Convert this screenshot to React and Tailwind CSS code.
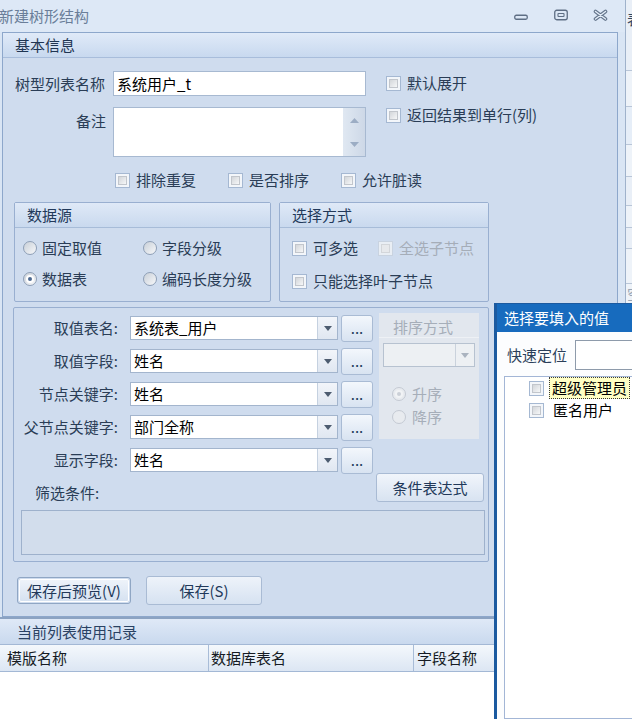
import React from "react";

function Check({ disabled = false }) {
  return (
    <span
      className={
        disabled
          ? "flex-none w-[15px] h-[15px] p-[2px] border border-[#c9d3e0] bg-[#e9eef4]"
          : "flex-none w-[15px] h-[15px] p-[2px] border border-[#a5b8d2] bg-[#f3f6fa]"
      }
    >
      <span
        className={
          disabled
            ? "block w-full h-full border border-[#d3d6da] bg-[#e7e9ec]"
            : "block w-full h-full border border-[#c2c6cc] bg-linear-to-br from-[#d3d6da] to-[#f6f7f8]"
        }
      />
    </span>
  );
}

function CheckItem({ label, disabled = false, className = "" }) {
  return (
    <div className={"flex items-center gap-[6px] h-[20px] " + className}>
      <Check disabled={disabled} />
      <span className={disabled ? "text-[#a5adb8]" : ""}>{label}</span>
    </div>
  );
}

function Radio({ checked = false, disabled = false }) {
  return (
    <span
      className={
        disabled
          ? "flex-none w-[14px] h-[14px] rounded-full border border-[#c4cad3] bg-[#e8ebef] flex items-center justify-center"
          : "flex-none w-[14px] h-[14px] rounded-full border border-[#8e9fb6] bg-linear-to-br from-[#c9d0d8] to-[#f7f8fa] flex items-center justify-center"
      }
    >
      {checked && (
        <span
          className={
            disabled
              ? "w-[8px] h-[8px] rounded-full border-2 border-[#f1f3f5] bg-[#cbd0d7]"
              : "w-[8px] h-[8px] rounded-full border-2 border-white bg-[#4b6890]"
          }
        />
      )}
    </span>
  );
}

function RadioItem({ label, checked, disabled, className = "" }) {
  return (
    <div className={"flex items-center gap-[5px] h-[20px] " + className}>
      <Radio checked={checked} disabled={disabled} />
      <span className={disabled ? "text-[#a9b1bc]" : ""}>{label}</span>
    </div>
  );
}

function GroupHeader({ children }) {
  return (
    <div className="h-[25px] flex-none border-b border-[#a7bcd8] bg-linear-to-b from-[#dfe9f7] to-[#c9d9ee] pl-[12px] flex items-center text-[#22395a]">
      {children}
    </div>
  );
}

function Combo({ value }) {
  return (
    <div className="ml-[12px] flex-none w-[208px] h-[24px] flex border border-[#a3b5cd] bg-white">
      <div className="flex-1 pl-[3px] flex items-center text-black">{value}</div>
      <div className="w-[20px] border-l border-[#c5d1e0] bg-linear-to-b from-[#f2f5fa] to-[#e0e7f1] flex items-center justify-center">
        <svg width="8" height="5" viewBox="0 0 8 5">
          <path d="M0 0h8L4 5z" fill="#4d5c70" />
        </svg>
      </div>
    </div>
  );
}

function FieldRow({ label, value }) {
  return (
    <div className="flex items-center h-[24px]">
      <span className="w-[104px] text-right">{label}</span>
      <Combo value={value} />
      <div className="ml-[3px] flex-none w-[32px] h-[27px] rounded-[3px] border border-[#a9bbd4] bg-linear-to-b from-[#f3f7fc] to-[#d8e3f1] flex items-center justify-center text-[#22395a]">
        ...
      </div>
    </div>
  );
}

function TitleBar() {
  return (
    <div className="h-[32px] flex-none flex items-start bg-[#dde8f6]">
      <span className="-ml-[1px] mt-[6px] text-[#6a7e99]">新建树形结构</span>
      <div className="ml-auto mr-[17px] mt-[9px] flex items-start">
        <svg width="14" height="12" viewBox="0 0 14 12">
          <rect x="0.75" y="6.25" width="12.5" height="4" rx="1.5" fill="none" stroke="#5e6e84" strokeWidth="1.3" />
        </svg>
        <svg className="ml-[26px]" width="14" height="12" viewBox="0 0 14 12">
          <rect x="0.75" y="1.25" width="12.5" height="9.5" rx="2" fill="none" stroke="#5e6e84" strokeWidth="1.3" />
          <rect x="4" y="4.5" width="6" height="3" rx="0.5" fill="none" stroke="#5e6e84" strokeWidth="1.1" />
        </svg>
        <svg className="ml-[25px]" width="15" height="12" viewBox="0 0 15 12">
          <path d="M2.5 2.5L12.5 10M12.5 2.5L2.5 10" stroke="#65768c" strokeWidth="3.6" strokeLinecap="round" />
          <path d="M2.5 2.5L12.5 10M12.5 2.5L2.5 10" stroke="#e4edf8" strokeWidth="1.4" strokeLinecap="round" />
        </svg>
      </div>
    </div>
  );
}

function BasicInfo() {
  return (
    <div className="ml-[2px] w-[616px] h-[585px] flex-none border border-[#8da7cb] bg-[#cfdcee] flex flex-col">
      <div className="h-[25px] flex-none border-b border-[#a8bddb] bg-linear-to-b from-[#e0eaf8] to-[#c8d9ef] pl-[12px] flex items-center text-[#1f3552]">
        基本信息
      </div>

      {/* name / remark */}
      <div className="mt-[13px] flex">
        <div className="flex flex-col gap-[11px]">
          <div className="flex items-center h-[25px]">
            <span className="w-[102px] text-right">树型列表名称</span>
            <div className="ml-[8px] w-[253px] h-[25px] border border-[#a7b9d1] bg-white pl-[3px] flex items-center text-black">
              系统用户_t
            </div>
          </div>
          <div className="flex">
            <span className="w-[103px] text-right pt-[4px]">备注</span>
            <div className="ml-[7px] w-[253px] h-[50px] border border-[#a7b9d1] bg-white flex justify-end">
              <div className="w-[22px] h-full bg-linear-to-r from-[#e0e8f2] to-[#cdd8e7] flex flex-col items-center justify-between pt-[10px] pb-[9px]">
                <svg width="9" height="5" viewBox="0 0 9 5">
                  <path d="M4.5 0L9 5H0z" fill="#9cadc4" />
                </svg>
                <svg width="9" height="5" viewBox="0 0 9 5">
                  <path d="M0 0h9L4.5 5z" fill="#9cadc4" />
                </svg>
              </div>
            </div>
          </div>
        </div>
        <div className="ml-[20px] mt-[2px] flex flex-col gap-[12px]">
          <CheckItem label="默认展开" />
          <CheckItem label="返回结果到单行(列)" />
        </div>
      </div>

      {/* options */}
      <div className="mt-[13px] pl-[112px] flex">
        <CheckItem label="排除重复" className="w-[113px]" />
        <CheckItem label="是否排序" className="w-[113px]" />
        <CheckItem label="允许脏读" className="w-[113px]" />
      </div>

      {/* data source + selection mode */}
      <div className="mt-[12px] ml-[11px] flex gap-[8px]">
        <div className="w-[257px] h-[100px] border border-[#99afd0] rounded-[2px] flex flex-col">
          <GroupHeader>数据源</GroupHeader>
          <div className="mt-[10px] pl-[8px] flex flex-col gap-[11px]">
            <div className="flex">
              <RadioItem label="固定取值" className="w-[120px]" />
              <RadioItem label="字段分级" />
            </div>
            <div className="flex">
              <RadioItem label="数据表" checked className="w-[120px]" />
              <RadioItem label="编码长度分级" />
            </div>
          </div>
        </div>
        <div className="w-[210px] h-[100px] border border-[#99afd0] rounded-[2px] flex flex-col">
          <GroupHeader>选择方式</GroupHeader>
          <div className="mt-[10px] pl-[12px] flex flex-col gap-[13px]">
            <div className="flex">
              <CheckItem label="可多选" className="w-[86px]" />
              <CheckItem label="全选子节点" disabled />
            </div>
            <CheckItem label="只能选择叶子节点" />
          </div>
        </div>
      </div>

      {/* table binding */}
      <div className="mt-[5px] ml-[10px] w-[476px] h-[255px] flex-none border border-[#99afd0] rounded-[2px] flex flex-col">
        <div className="flex">
          <div className="mt-[8px] flex flex-col gap-[9px]">
            <FieldRow label="取值表名:" value="系统表_用户" />
            <FieldRow label="取值字段:" value="姓名" />
            <FieldRow label="节点关键字:" value="姓名" />
            <FieldRow label="父节点关键字:" value="部门全称" />
            <FieldRow label="显示字段:" value="姓名" />
          </div>
          <div className="ml-[6px] mt-[5px] w-[100px] h-[126px] bg-[#e2e7ee] flex flex-col text-[#a6aeb9]">
            <div className="h-[25px] pt-[3px] border-b border-[#eef1f5] pl-[14px] flex items-center">排序方式</div>
            <div className="mt-[5px] ml-[4px] w-[92px] h-[24px] border border-[#b7c2d0] bg-[#edf0f3] flex justify-end">
              <div className="w-[19px] border-l border-[#cad2dc] flex items-center justify-center">
                <svg width="8" height="5" viewBox="0 0 8 5">
                  <path d="M0 0h8L4 5z" fill="#aab3bf" />
                </svg>
              </div>
            </div>
            <div className="mt-[17px] ml-[13px] flex flex-col gap-[3px]">
              <div className="flex items-center gap-[6px] h-[20px]">
                <Radio checked disabled />
                <span>升序</span>
              </div>
              <div className="flex items-center gap-[6px] h-[20px]">
                <Radio disabled />
                <span>降序</span>
              </div>
            </div>
          </div>
        </div>
        <div className="mt-[1px] h-[29px] flex items-start">
          <span className="ml-[21px] mt-[10px]">筛选条件:</span>
          <div className="ml-auto mr-[4px] w-[108px] h-[29px] rounded-[3px] border border-[#a9bbd4] bg-linear-to-b from-[#f1f5fb] to-[#d8e3f1] flex items-center justify-center text-[#22395a]">
            条件表达式
          </div>
        </div>
        <div className="mt-[8px] ml-[7px] mr-[3px] h-[45px] border border-[#9eb1cc] bg-[#d2ddec]" />
      </div>

      {/* actions */}
      <div className="mt-[14px] ml-[14px] flex items-center gap-[15px]">
        <div className="w-[114px] h-[27px] rounded-[3px] border border-[#8fa6c4] p-[1px]">
          <div className="w-full h-full rounded-[2px] border border-white bg-linear-to-b from-[#eef3fa] to-[#d6e2f1] flex items-center justify-center text-[#22395a]">
            保存后预览(V)
          </div>
        </div>
        <div className="w-[116px] h-[29px] rounded-[3px] border border-[#a9bbd4] bg-linear-to-b from-[#eef3fa] to-[#d6e2f1] flex items-center justify-center text-[#22395a]">
          保存(S)
        </div>
      </div>
    </div>
  );
}

function UsageLog() {
  return (
    <div className="flex-1 flex flex-col">
      <div className="h-[25px] flex-none bg-linear-to-b from-[#dfe9f7] to-[#c9d9ee] pl-[17px] flex items-center text-[#2a4263]">
        当前列表使用记录
      </div>
      <div className="h-[28px] flex-none flex border-y border-[#a3b8d5] bg-linear-to-b from-[#f4f8fc] to-[#dce6f3] text-[#151b24]">
        <div className="w-[209px] pl-[7px] border-r border-[#a8bcd7] flex items-center">模版名称</div>
        <div className="w-[205px] pl-[2px] border-r border-[#a8bcd7] flex items-center">数据库表名</div>
        <div className="flex-1 pl-[3px] flex items-center">字段名称</div>
      </div>
      <div className="flex-1 bg-white" />
    </div>
  );
}

function BackStrip() {
  const rows = [
    ["h-[71px]", "bg-[#e9eff7]"],
    ["h-[36px]", "bg-[#eef3f9]"],
    ["h-[38px]", "bg-[#e6eef8]"],
    ["h-[32px]", "bg-[#eef3f9]"],
    ["h-[29px]", "bg-[#e9eff7]"],
    ["h-[22px]", "bg-[#eef3f9]"],
    ["h-[21px]", "bg-[#e9eff7]"],
    ["h-[35px]", "bg-[#eef3f9]"],
  ];
  return (
    <div className="flex-1 flex flex-col bg-[#eef3f9] overflow-hidden">
      {rows.map(([h, bg], i) => (
        <div key={i} className={h + " " + bg + " flex-none border-b border-[#b9c6d8] pl-[1px] text-[#34485f]"}>
          {i === 0 ? <div className="mt-[9px]">表</div> : null}
        </div>
      ))}
      <div className="pl-[1px] text-[#9aa6b6]">空</div>
    </div>
  );
}

function PickDialog() {
  return (
    <div className="absolute left-[494px] top-[303px] w-[150px] h-[416px] flex flex-col border-l-[3px] border-t border-[#1b5aa0] bg-[#fcfdfe]">
      <div className="h-[28px] flex-none bg-[#176bbe] pl-[7px] flex items-center text-white whitespace-nowrap">选择要填入的值</div>
      <div className="mt-[8px] h-[30px] flex-none flex items-center">
        <span className="ml-[10px] flex-none whitespace-nowrap text-[#2b3f5a]">快速定位</span>
        <div className="ml-[8px] w-[80px] h-[30px] flex-none border border-[#8e9bab] bg-white" />
      </div>
      <div className="mt-[6px] ml-[7px] flex-1 border border-[#a3b6d6] bg-white flex flex-col">
        <div className="h-[22px] flex items-center pl-[24px]">
          <Check />
          <span className="ml-[5px] h-[22px] px-[2px] border border-dotted border-[#3a3a3a] bg-[#ffffc4] text-black flex items-center whitespace-nowrap">
            超级管理员
          </span>
        </div>
        <div className="h-[22px] flex items-center pl-[24px]">
          <Check />
          <span className="ml-[9px] text-black whitespace-nowrap">匿名用户</span>
        </div>
      </div>
    </div>
  );
}

export default function App() {
  return (
    <div className="relative w-[632px] h-[719px] overflow-hidden flex bg-[#dbe6f4] font-[family-name:'Noto_Sans_CJK_SC','Noto_Sans',sans-serif] text-[15px] leading-[20px] text-[#2a3d56]">
      <div className="w-[626px] h-full flex-none flex flex-col border-r border-[#9fb2cb] bg-[#d9e5f4]">
        <TitleBar />
        <BasicInfo />
        <div className="h-[2px] flex-none bg-[#8ca3c2]" />
        <UsageLog />
      </div>
      <BackStrip />
      <PickDialog />
    </div>
  );
}
